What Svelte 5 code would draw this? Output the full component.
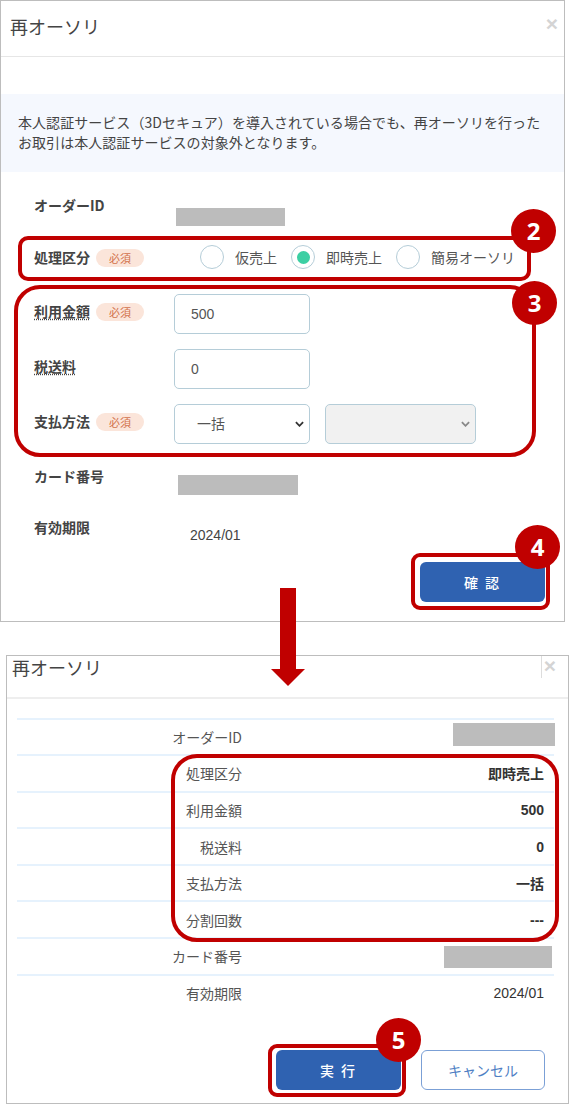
<script>
  const confirmRows = [
    { label: 'オーダーID', value: null, mask: 'm-id' },
    { label: '処理区分', value: '即時売上' },
    { label: '利用金額', value: '500' },
    { label: '税送料', value: '0' },
    { label: '支払方法', value: '一括' },
    { label: '分割回数', value: '---' },
    { label: 'カード番号', value: null, mask: 'm-card' },
    { label: '有効期限', value: '2024/01', plain: true }
  ];
</script>

<main class="page">
  <section class="panel first">
    <header class="head">
      <h2>再オーソリ</h2>
      <span class="close">×</span>
    </header>
    <p class="notice">本人認証サービス（3Dセキュア）を導入されている場合でも、再オーソリを行った<br />お取引は本人認証サービスの対象外となります。</p>

    <div class="form">
      <div class="row r-id">
        <div class="label">オーダーID</div>
        <div class="mask id"></div>
      </div>
      <div class="row r-kind">
        <div class="label">処理区分<span class="req">必須</span></div>
        <div class="radios">
          <span class="radio"></span><span class="rt">仮売上</span>
          <span class="radio on"></span><span class="rt">即時売上</span>
          <span class="radio"></span><span class="rt">簡易オーソリ</span>
        </div>
      </div>
      <div class="row r-field">
        <div class="label"><u>利用金額</u><span class="req">必須</span></div>
        <div class="input">500</div>
      </div>
      <div class="row r-field">
        <div class="label"><u>税送料</u></div>
        <div class="input">0</div>
      </div>
      <div class="row r-field">
        <div class="label">支払方法<span class="req">必須</span></div>
        <div class="input select">一括
          <svg viewBox="0 0 10 6" class="chev"><path d="M1 1l4 4 4-4" /></svg>
        </div>
        <div class="input select off">
          <svg viewBox="0 0 10 6" class="chev"><path d="M1 1l4 4 4-4" /></svg>
        </div>
      </div>
      <div class="row r-card">
        <div class="label">カード番号</div>
        <div class="mask card"></div>
      </div>
      <div class="row r-exp">
        <div class="label">有効期限</div>
        <div class="exp">2024/01</div>
      </div>
    </div>

    <div class="foot one">
      <button class="btn primary">確 認</button>
    </div>

    <div class="mark rect-kind"></div>
    <div class="mark rect-fields"></div>
    <div class="mark rect-confirm"></div>
    <div class="badge b2">2</div>
    <div class="badge b3">3</div>
    <div class="badge b4">4</div>
  </section>

  <section class="panel second">
    <header class="head two">
      <h2>再オーソリ</h2>
      <span class="close boxed">×</span>
    </header>
    <div class="table">
      {#each confirmRows as r}
        <div class="trow">
          <div class="tl">{r.label}</div>
          <div class="tv" class:plain={r.plain}>
            {#if r.value}{r.value}{:else}<span class="mask {r.mask}"></span>{/if}
          </div>
        </div>
      {/each}
    </div>
    <div class="foot two">
      <button class="btn primary">実 行</button>
      <button class="btn ghost">キャンセル</button>
    </div>
    <div class="mark rect-table"></div>
    <div class="mark rect-run"></div>
    <div class="badge b5">5</div>
  </section>

  <svg class="arrow" viewBox="0 0 34 98"><path d="M9 0h16v81h9L17 98 0 81h9z" /></svg>
</main>

<style>
  :global(body) { margin: 0; background: #fff; }
  .page {
    position: relative;
    width: 569px;
    height: 1104px;
    overflow: hidden;
    font-family: "Noto Sans CJK JP", "Liberation Sans", sans-serif;
    color: #444;
  }
  .panel { position: absolute; box-sizing: border-box; background: #fff; border: 1px solid #bdbdbd; }
  .first { left: 0; top: 0; width: 565px; height: 622px; }
  .second { left: 6px; top: 655px; width: 563px; height: 449px; }
  .head { height: 55px; border-bottom: 1px solid #e6e6e6; display: flex; justify-content: space-between; padding: 0 6px 0 9px; }
  .head h2 { margin: 0; font-size: 18px; font-weight: 400; line-height: 50px; color: #444; }
  .close { font: 700 21px/46px "Liberation Sans", sans-serif; color: #d4d4d4; }
  .head.two { height: 41px; border-bottom: 2px solid #eee; padding-left: 5px; }
  .head.two h2 { line-height: 22px; }
  .close.boxed { border-left: 1px solid #ddd; height: 22px; line-height: 20px; padding: 0 6px 0 2px; }
  .notice { margin: 37px 0 0; padding: 18px 17px 0; height: 60px; background: #f5f8fe; font-size: 14px; line-height: 20px; letter-spacing: 0.05px; color: #444; white-space: nowrap; }
  .form { padding-left: 33px; }
  .row { display: flex; align-items: flex-start; box-sizing: border-box; }
  .label { width: 140px; flex: none; font-size: 14px; font-weight: 700; color: #444; line-height: 20px; display: flex; align-items: center; }
  .label u { text-decoration: underline dotted #444; text-underline-offset: 2px; }
  .req { margin-left: 6px; width: 48px; height: 18px; border-radius: 9px; background: #fbe5da; color: #d2714a; font-size: 11px; line-height: 18px; text-align: center; font-weight: 400; position: relative; top: 1px; }
  .mask { display: block; background: #bcbcbc; }
  .r-id { height: 66px; padding-top: 23px; }
  .mask.id { width: 109px; height: 18px; margin: 13px 0 0 2px; }
  .r-kind { height: 56px; padding-top: 9px; }
  .radios { display: flex; align-items: center; height: 24px; margin: -2px 0 0 26px; }
  .radio { box-sizing: border-box; width: 24px; height: 24px; border: 1px solid #b5cdd8; border-radius: 50%; display: flex; align-items: center; justify-content: center; flex: none; }
  .radio.on::after { content: ""; width: 13px; height: 13px; border-radius: 50%; background: #3ccfa3; }
  .rt { font-size: 14px; margin: 0 14px 0 11px; color: #555; }
  .rt:last-child { margin-right: 0; }
  .r-field { height: 55px; }
  .r-field .label { padding-top: 7px; }
  .input { box-sizing: border-box; width: 136px; height: 40px; border: 1px solid #b5cdd8; border-radius: 5px; padding-left: 16px; font-size: 14px; line-height: 39px; color: #555; flex: none; position: relative; font-family: "Liberation Sans", "Noto Sans CJK JP", sans-serif; }
  .select { padding-left: 22px; line-height: 36px; font-family: "Noto Sans CJK JP", sans-serif; }
  .select.off { width: 151px; margin-left: 15px; background: #f1f1f1; }
  .chev { position: absolute; right: 5px; top: 16px; width: 9px; height: 6px; fill: none; stroke: #333; stroke-width: 2; }
  .off .chev { stroke: #888; }
  .r-card { height: 50px; padding-top: 7px; }
  .mask.card { width: 120px; height: 20px; margin: 9px 0 0 4px; }
  .r-exp { height: 38px; padding-top: 8px; }
  .exp { font: 14px/20px "Liberation Sans", sans-serif; margin: 8px 0 0 16px; color: #444; }
  .foot { display: flex; justify-content: flex-end; gap: 20px; }
  .foot.one { padding-right: 19px; margin-top: 15px; }
  .foot.two { padding-right: 23px; position: absolute; right: 0; top: 394px; }
  .btn { box-sizing: border-box; width: 125px; height: 40px; border-radius: 6px; font-family: "Noto Sans CJK JP", sans-serif; font-size: 14px; padding: 0; }
  .primary { background: #2f62b1; color: #fff; border: 0; font-weight: 500; letter-spacing: 2px; }
  .ghost { width: 124px; background: #fff; color: #4f7fc4; border: 1px solid #7ba0d6; }
  .table { margin: 18.5px 14px 0 10px; border-top: 2px solid #e6f2fd; }
  .trow { display: flex; justify-content: space-between; height: 34.6px; border-bottom: 2px solid #e6f2fd; align-items: center; }
  .trow:last-child { border-bottom: 0; }
  .tl { width: 225px; text-align: right; font-size: 14px; color: #555; }
  .tv { font: 700 14px "Liberation Sans", "Noto Sans CJK JP", sans-serif; color: #333; padding-right: 10px; }
  .tv.plain { font-weight: 400; }
  .m-id { width: 102px; height: 23px; margin: -5px -11px 0 0; }
  .m-card { width: 108px; height: 22px; margin: 2px -8px 0 0; }
  .mark { position: absolute; box-sizing: border-box; border: 4px solid #c00000; }
  .rect-kind { left: 17px; top: 235px; width: 513px; height: 45px; border-radius: 10px; }
  .rect-fields { left: 13px; top: 284px; width: 522px; height: 172px; border-radius: 26px; }
  .rect-confirm { left: 410px; top: 552px; width: 139px; height: 57px; border-radius: 9px; }
  .rect-table { left: 164px; top: 98px; width: 388px; height: 188px; border-radius: 26px; }
  .rect-run { left: 261px; top: 388px; width: 138px; height: 53px; border-radius: 9px; }
  .badge { position: absolute; width: 45px; height: 44px; border-radius: 50%; background: #c00000; color: #fff; font: 700 24px/44px "Open Sans", "Liberation Sans", sans-serif; text-align: center; }
  .b2 { left: 510px; top: 208px; }
  .b3 { left: 511px; top: 280px; }
  .b4 { left: 514px; top: 524px; }
  .b5 { left: 369px; top: 362px; }
  .arrow { position: absolute; left: 271px; top: 588px; width: 34px; height: 98px; fill: #c00000; }
</style>
